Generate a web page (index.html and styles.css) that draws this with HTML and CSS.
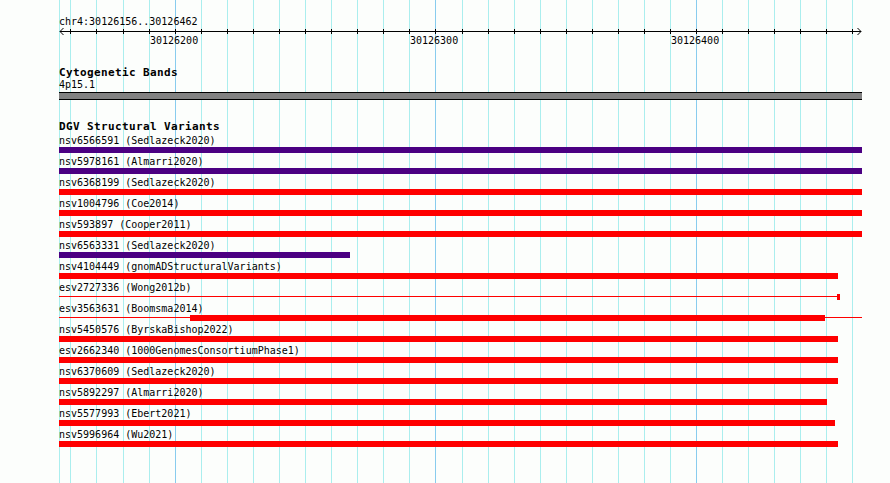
FILE: index.html
```html
<!DOCTYPE html>
<html>
<head>
<meta charset="utf-8">
<title>DGV Structural Variants</title>
<link rel="stylesheet" href="styles.css">
</head>
<body>
<div class="panel">
  <svg class="grid" width="890" height="483" viewBox="0 0 890 483" shape-rendering="crispEdges">
    <g class="minor">
      <rect x="59" y="0" width="1" height="483"/>
      <rect x="70" y="0" width="1" height="483"/>
      <rect x="96" y="0" width="1" height="483"/>
      <rect x="123" y="0" width="1" height="483"/>
      <rect x="149" y="0" width="1" height="483"/>
      <rect x="201" y="0" width="1" height="483"/>
      <rect x="227" y="0" width="1" height="483"/>
      <rect x="253" y="0" width="1" height="483"/>
      <rect x="279" y="0" width="1" height="483"/>
      <rect x="305" y="0" width="1" height="483"/>
      <rect x="331" y="0" width="1" height="483"/>
      <rect x="357" y="0" width="1" height="483"/>
      <rect x="383" y="0" width="1" height="483"/>
      <rect x="409" y="0" width="1" height="483"/>
      <rect x="462" y="0" width="1" height="483"/>
      <rect x="488" y="0" width="1" height="483"/>
      <rect x="514" y="0" width="1" height="483"/>
      <rect x="540" y="0" width="1" height="483"/>
      <rect x="566" y="0" width="1" height="483"/>
      <rect x="592" y="0" width="1" height="483"/>
      <rect x="618" y="0" width="1" height="483"/>
      <rect x="644" y="0" width="1" height="483"/>
      <rect x="670" y="0" width="1" height="483"/>
      <rect x="722" y="0" width="1" height="483"/>
      <rect x="748" y="0" width="1" height="483"/>
      <rect x="774" y="0" width="1" height="483"/>
      <rect x="800" y="0" width="1" height="483"/>
      <rect x="826" y="0" width="1" height="483"/>
      <rect x="852" y="0" width="1" height="483"/>
    </g>
    <g class="major">
      <rect x="175" y="0" width="1" height="483"/>
      <rect x="435" y="0" width="1" height="483"/>
      <rect x="696" y="0" width="1" height="483"/>
    </g>
  </svg>

  <div class="content">
    <div class="locus">chr4:30126156..30126462</div>

    <svg class="ruler" width="803" height="6" viewBox="0 0 803 6">
      <g shape-rendering="crispEdges">
        <rect x="1" y="3" width="801" height="1"/>
        <rect x="11" y="1" width="1" height="5"/>
        <rect x="37" y="1" width="1" height="5"/>
        <rect x="64" y="1" width="1" height="5"/>
        <rect x="90" y="1" width="1" height="5"/>
        <rect x="116" y="1" width="1" height="5"/>
        <rect x="142" y="1" width="1" height="5"/>
        <rect x="168" y="1" width="1" height="5"/>
        <rect x="194" y="1" width="1" height="5"/>
        <rect x="220" y="1" width="1" height="5"/>
        <rect x="246" y="1" width="1" height="5"/>
        <rect x="272" y="1" width="1" height="5"/>
        <rect x="298" y="1" width="1" height="5"/>
        <rect x="324" y="1" width="1" height="5"/>
        <rect x="350" y="1" width="1" height="5"/>
        <rect x="376" y="1" width="1" height="5"/>
        <rect x="403" y="1" width="1" height="5"/>
        <rect x="429" y="1" width="1" height="5"/>
        <rect x="455" y="1" width="1" height="5"/>
        <rect x="481" y="1" width="1" height="5"/>
        <rect x="507" y="1" width="1" height="5"/>
        <rect x="533" y="1" width="1" height="5"/>
        <rect x="559" y="1" width="1" height="5"/>
        <rect x="585" y="1" width="1" height="5"/>
        <rect x="611" y="1" width="1" height="5"/>
        <rect x="637" y="1" width="1" height="5"/>
        <rect x="663" y="1" width="1" height="5"/>
        <rect x="689" y="1" width="1" height="5"/>
        <rect x="715" y="1" width="1" height="5"/>
        <rect x="741" y="1" width="1" height="5"/>
        <rect x="767" y="1" width="1" height="5"/>
        <rect x="793" y="1" width="1" height="5"/>
      </g>
      <polyline class="arrow" points="4.5,0 1,3.5 4.5,7"/>
      <polyline class="arrow" points="798.5,0 802,3.5 798.5,7"/>
    </svg>

    <div class="ticklabels">
      <span class="ticklabel" style="left:91px">30126200</span>
      <span class="ticklabel" style="left:351px">30126300</span>
      <span class="ticklabel" style="left:612px">30126400</span>
    </div>

    <div class="track-title cyto-title">Cytogenetic Bands</div>
    <div class="band-label">4p15.1</div>
    <div class="band"></div>

    <div class="track-title dgv-title">DGV Structural Variants</div>

    <div class="features">
      <div class="feature">
        <div class="feature-label">nsv6566591 (Sedlazeck2020)</div>
        <div class="glyph"><div class="bar purple" style="width:803px"></div></div>
      </div>
      <div class="feature">
        <div class="feature-label">nsv5978161 (Almarri2020)</div>
        <div class="glyph"><div class="bar purple" style="width:803px"></div></div>
      </div>
      <div class="feature">
        <div class="feature-label">nsv6368199 (Sedlazeck2020)</div>
        <div class="glyph"><div class="bar red" style="width:803px"></div></div>
      </div>
      <div class="feature">
        <div class="feature-label">nsv1004796 (Coe2014)</div>
        <div class="glyph"><div class="bar red" style="width:803px"></div></div>
      </div>
      <div class="feature">
        <div class="feature-label">nsv593897 (Cooper2011)</div>
        <div class="glyph"><div class="bar red" style="width:803px"></div></div>
      </div>
      <div class="feature">
        <div class="feature-label">nsv6563331 (Sedlazeck2020)</div>
        <div class="glyph"><div class="bar purple" style="width:291px"></div></div>
      </div>
      <div class="feature">
        <div class="feature-label">nsv4104449 (gnomADStructuralVariants)</div>
        <div class="glyph"><div class="bar red" style="width:779px"></div></div>
      </div>
      <div class="feature">
        <div class="feature-label">esv2727336 (Wong2012b)</div>
        <div class="glyph">
          <div class="connector" style="left:0;width:778px"></div>
          <div class="bar red" style="margin-left:778px;width:3px"></div>
        </div>
      </div>
      <div class="feature">
        <div class="feature-label">esv3563631 (Boomsma2014)</div>
        <div class="glyph">
          <div class="connector" style="left:0;width:803px"></div>
          <div class="bar red" style="margin-left:131px;width:635px"></div>
        </div>
      </div>
      <div class="feature">
        <div class="feature-label">nsv5450576 (ByrskaBishop2022)</div>
        <div class="glyph"><div class="bar red" style="width:779px"></div></div>
      </div>
      <div class="feature">
        <div class="feature-label">esv2662340 (1000GenomesConsortiumPhase1)</div>
        <div class="glyph"><div class="bar red" style="width:779px"></div></div>
      </div>
      <div class="feature">
        <div class="feature-label">nsv6370609 (Sedlazeck2020)</div>
        <div class="glyph"><div class="bar red" style="width:779px"></div></div>
      </div>
      <div class="feature">
        <div class="feature-label">nsv5892297 (Almarri2020)</div>
        <div class="glyph"><div class="bar red" style="width:768px"></div></div>
      </div>
      <div class="feature">
        <div class="feature-label">nsv5577993 (Ebert2021)</div>
        <div class="glyph"><div class="bar red" style="width:776px"></div></div>
      </div>
      <div class="feature">
        <div class="feature-label">nsv5996964 (Wu2021)</div>
        <div class="glyph"><div class="bar red" style="width:779px"></div></div>
      </div>
    </div>
  </div>
</div>
</body>
</html>
```

FILE: styles.css
```css
html, body {
  margin: 0;
  padding: 0;
  background: #fcfefc;
}

.panel {
  position: relative;
  width: 890px;
  height: 483px;
  overflow: hidden;
  background: #fcfefc;
  font-family: "DejaVu Sans Mono", "Liberation Mono", monospace;
  font-size: 10px;
  color: #000;
}

.grid {
  position: absolute;
  top: 0;
  left: 0;
  display: block;
}

.grid .minor {
  fill: #aaeeee;
}

.grid .major {
  fill: #88ccee;
}

.content {
  position: relative;
  width: 803px;
  margin-left: 59px;
  padding-top: 15px;
}

.locus {
  line-height: 13px;
  height: 13px;
  white-space: nowrap;
}

.ruler {
  display: block;
  overflow: visible;
  fill: #000;
}

.ruler .arrow {
  fill: none;
  stroke: #000;
  stroke-width: 1;
}

.ticklabels {
  position: relative;
  height: 13px;
  line-height: 13px;
}

.ticklabel {
  position: absolute;
  top: 0;
  white-space: nowrap;
}

.track-title {
  font-size: 11px;
  font-weight: bold;
  letter-spacing: 0.38px;
  line-height: 12px;
  height: 12px;
  white-space: nowrap;
}

.cyto-title {
  margin-top: 20px;
}

.band-label {
  line-height: 12px;
  height: 12px;
}

.band {
  margin-top: 1px;
  height: 6px;
  background: #828282;
  border-top: 1px solid #000;
  border-bottom: 1px solid #000;
}

.dgv-title {
  margin-top: 21px;
}

.features {
  display: flex;
  flex-direction: column;
  margin-top: 1px;
}

.feature {
  display: flex;
  flex-direction: column;
  height: 21px;
}

.feature-label {
  line-height: 13px;
  height: 13px;
  white-space: nowrap;
}

.glyph {
  position: relative;
  height: 6px;
  display: flex;
}

.bar {
  height: 6px;
  flex: none;
  position: relative;
}

.bar.red {
  background: #ff0000;
}

.bar.purple {
  background: #4b0082;
}

.connector {
  position: absolute;
  top: 2px;
  height: 1px;
  background: #ff0000;
}
```
